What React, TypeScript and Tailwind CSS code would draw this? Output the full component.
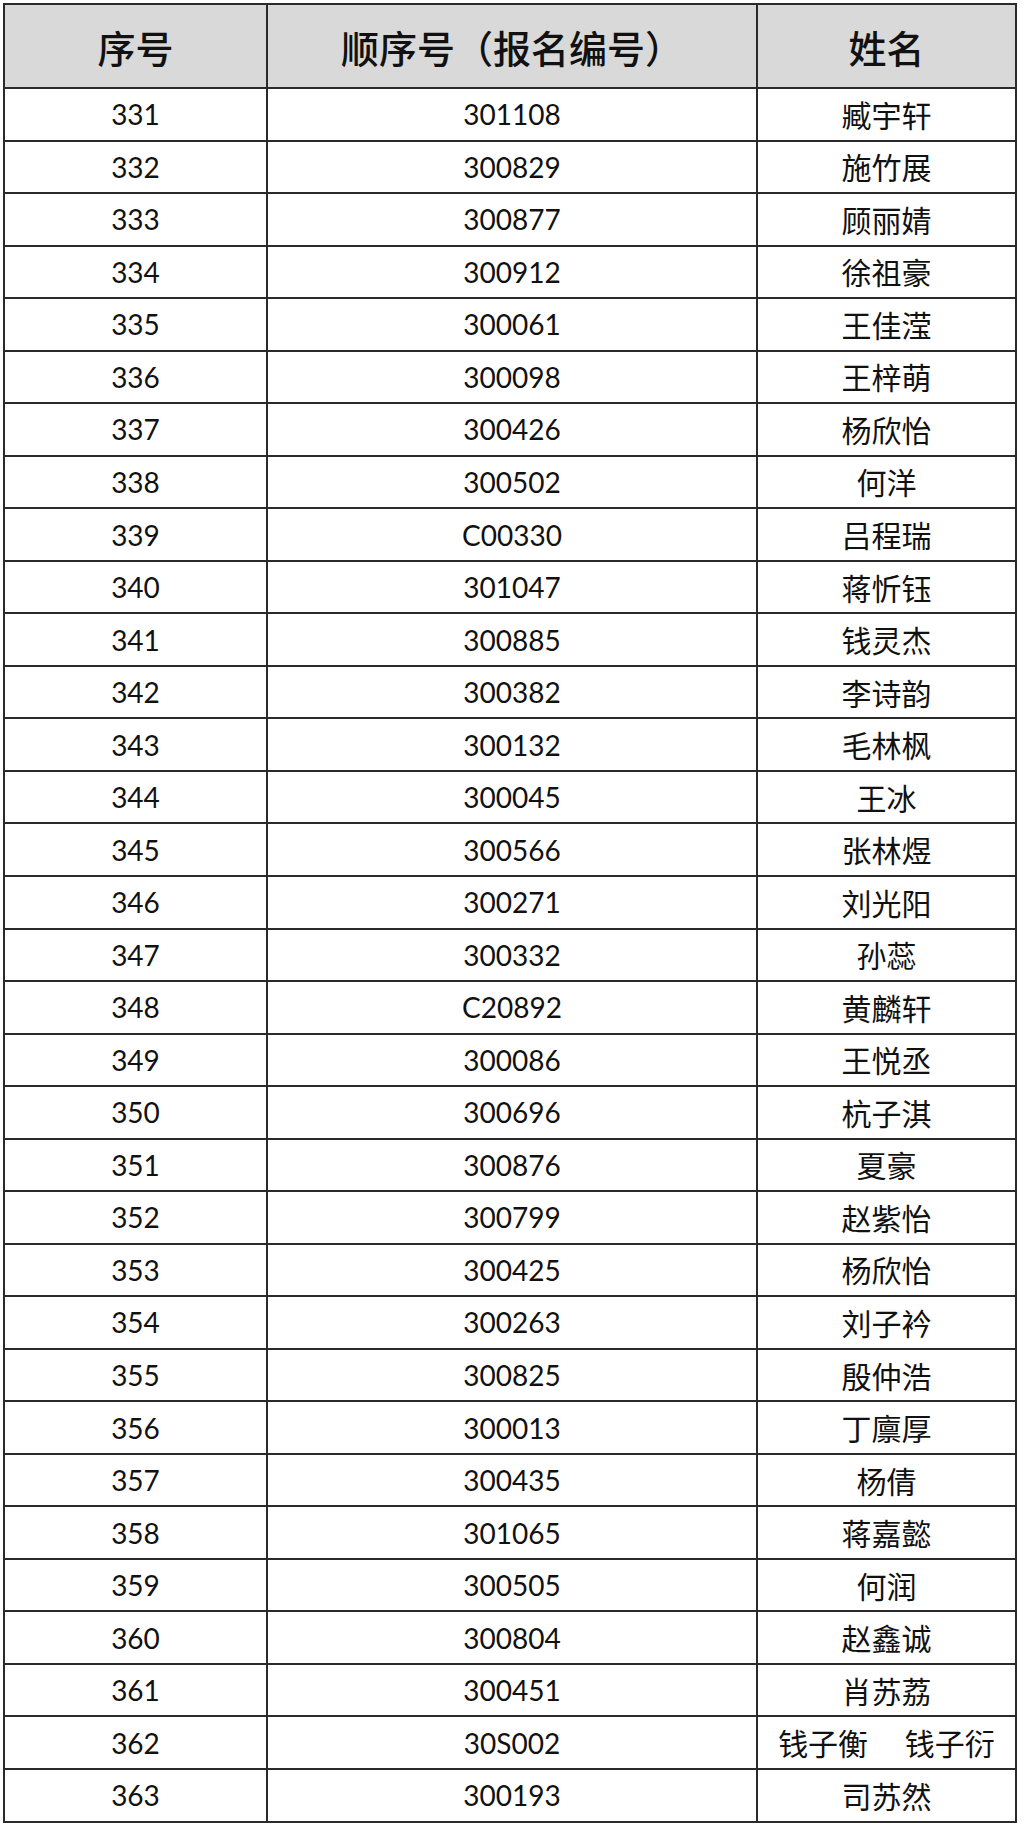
const rows: [string, string, string][] = [
  ['331', '301108', '臧宇轩'],
  ['332', '300829', '施竹展'],
  ['333', '300877', '顾丽婧'],
  ['334', '300912', '徐祖豪'],
  ['335', '300061', '王佳滢'],
  ['336', '300098', '王梓萌'],
  ['337', '300426', '杨欣怡'],
  ['338', '300502', '何洋'],
  ['339', 'C00330', '吕程瑞'],
  ['340', '301047', '蒋忻钰'],
  ['341', '300885', '钱灵杰'],
  ['342', '300382', '李诗韵'],
  ['343', '300132', '毛林枫'],
  ['344', '300045', '王冰'],
  ['345', '300566', '张林煜'],
  ['346', '300271', '刘光阳'],
  ['347', '300332', '孙蕊'],
  ['348', 'C20892', '黄麟轩'],
  ['349', '300086', '王悦丞'],
  ['350', '300696', '杭子淇'],
  ['351', '300876', '夏豪'],
  ['352', '300799', '赵紫怡'],
  ['353', '300425', '杨欣怡'],
  ['354', '300263', '刘子衿'],
  ['355', '300825', '殷仲浩'],
  ['356', '300013', '丁廪厚'],
  ['357', '300435', '杨倩'],
  ['358', '301065', '蒋嘉懿'],
  ['359', '300505', '何润'],
  ['360', '300804', '赵鑫诚'],
  ['361', '300451', '肖苏荔'],
  ['362', '30S002', '钱子衡　 钱子衍'],
  ['363', '300193', '司苏然'],
];

const cell = 'flex items-center justify-center border-r-2 border-b-2 border-[#2a2a2a]';
const cols = 'grid grid-cols-[263px_490px_259px]';
const num = "font-['Lato','Liberation_Sans',sans-serif] text-[28px]";
const cjk = "font-['Noto_Sans_CJK_SC',sans-serif] text-[30px]";

export default function App() {
  return (
    <div className="min-h-screen bg-white pt-[3px] pl-[3px] text-[#111]">
      <div className="w-[1014px] border-l-2 border-t-2 border-[#2a2a2a]">
        {/* Header */}
        <div className={`${cols} h-[84px] bg-[#d9d9d9] font-['Noto_Sans_CJK_SC',sans-serif] text-[38px] font-medium`}>
          <div className={cell}>序号</div>
          <div className={cell}>顺序号（报名编号）</div>
          <div className={cell}>姓名</div>
        </div>

        {rows.map(([idx, code, name]) => (
          <div key={idx} className={`${cols} h-[52.545px]`}>
            <div className={`${cell} ${num}`}>{idx}</div>
            <div className={`${cell} ${num}`}>{code}</div>
            <div className={`${cell} ${cjk} whitespace-pre`}>{name}</div>
          </div>
        ))}
      </div>
    </div>
  );
}
